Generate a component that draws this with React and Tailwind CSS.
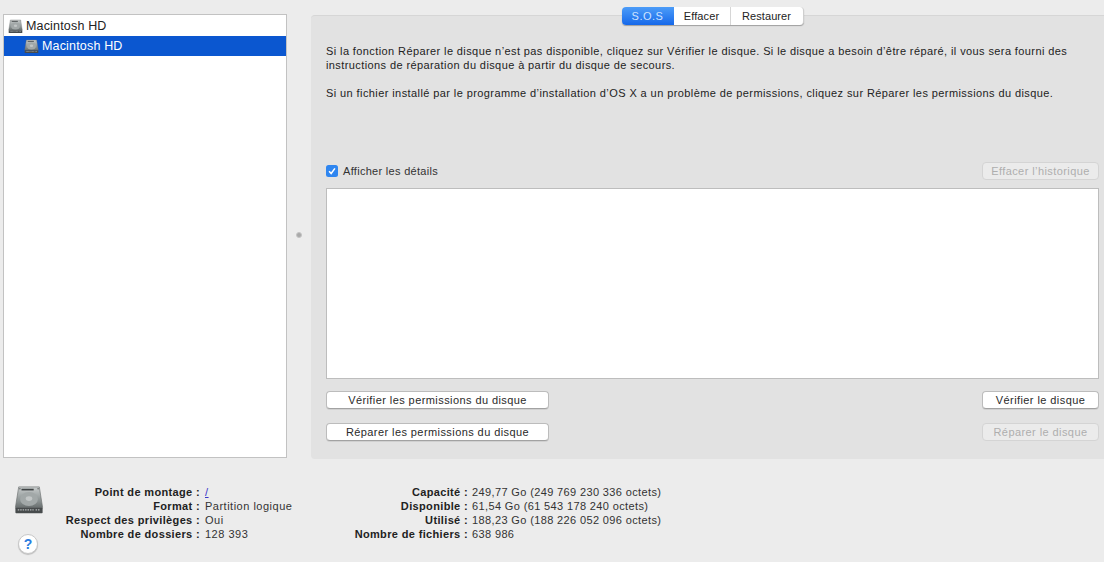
function HddIcon({ className, id }) {
  return (
    <svg viewBox="0 0 32 32" className={className}>
      <defs>
        <linearGradient id={id} x1="0" y1="0" x2="0" y2="1">
          <stop offset="0" stopColor="#c9cdcd" />
          <stop offset="0.65" stopColor="#8d9494" />
          <stop offset="1" stopColor="#6a7070" />
        </linearGradient>
      </defs>
      <path d="M5 2 H27 L30.5 24 H1.5 Z" fill={`url(#${id})`} stroke="#6b6f70" strokeWidth="0.7" />
      <rect x="1.5" y="24" width="29" height="6" rx="0.8" fill="#474b4c" />
      <path d="M4 26.5h17M23 26.5h5" stroke="#b3b7b7" strokeWidth="1.4" strokeDasharray="1.6 1" />
      <ellipse cx="16" cy="15" rx="9.5" ry="7.5" fill="#a2a8a8" />
      <ellipse cx="16" cy="14.5" rx="3.5" ry="2.6" fill="#c2c6c6" />
      <rect x="8" y="4" width="13" height="1.8" fill="#3f4344" />
      <circle cx="6.3" cy="4" r="0.7" fill="#555" />
      <circle cx="25.7" cy="4" r="0.7" fill="#555" />
    </svg>
  );
}

function SmallButton({ children, disabled, className = "" }) {
  return (
    <button
      className={
        "h-[18px] rounded-[4px] text-[11px] leading-[16px] tracking-[0.42px] border " +
        (disabled
          ? "border-[#d4d4d4] bg-[#ebebeb] text-[#aeaeae] "
          : "border-[#bcbcbc] border-b-[#a2a2a2] bg-white text-[#2a2a2a] shadow-[0_1px_0_rgba(0,0,0,0.08)] ") +
        className
      }
    >
      {children}
    </button>
  );
}

function InfoRow({ label, value, link }) {
  return (
    <>
      <span className="text-right font-bold text-[#222] tracking-[0.35px] whitespace-nowrap">{label} :</span>
      <span className={link ? "text-[#3a34c8] underline" : "text-[#333] whitespace-nowrap"}>{value}</span>
    </>
  );
}

export default function App() {
  return (
    <div
      className="w-[1104px] h-[562px] overflow-hidden flex flex-col bg-[#ececec] text-[#222]"
      style={{ fontFamily: '"Liberation Sans", Arial, sans-serif' }}
    >
      <div className="flex h-[445px] mt-[14px] shrink-0">
        <div className="ml-[3px] w-[284px] h-[444px] bg-white border border-[#c2c2c2] pt-[1px] text-[12.5px] tracking-[0.17px]">
          <div className="h-[20px] flex items-center pl-[4px] gap-[3px] text-[#222]">
            <HddIcon id="hddA" className="w-[15px] h-[15px]" />
            <span>Macintosh HD</span>
          </div>
          <div className="h-[20px] flex items-center pl-[20px] gap-[3px] bg-[#0b57d0] text-white">
            <HddIcon id="hddB" className="w-[15px] h-[15px]" />
            <span>Macintosh HD</span>
          </div>
        </div>

        <div className="w-[24px] flex items-center justify-center">
          <div className="w-[6px] h-[6px] rounded-full bg-[#a9a9a9] border border-[#c4c4c4] -mt-[3px]" />
        </div>

        <div className="flex-1 h-[444px] mt-[1px] bg-[#e2e2e2] border-t border-[#d6d6d6] rounded-tl-[4px] rounded-bl-[4px] flex flex-col pl-[15px] pr-[5px]">
          <div className="-mt-[9px] self-center flex h-[18px] w-[182px] rounded-[4px] overflow-hidden bg-white text-[11px] tracking-[0.1px] shadow-[0_1px_1px_rgba(0,0,0,0.3)] border-r border-[#cfcfcf]">
            <div className="w-[52px] flex items-center justify-center text-[#cfe3ff] tracking-[0.5px] bg-gradient-to-b from-[#4c9cf8] to-[#1568ea]">S.O.S</div>
            <div className="w-[57px] flex items-center justify-center border-r border-[#d6d6d6] text-[#222]">Effacer</div>
            <div className="flex-1 flex items-center justify-center text-[#222]">Restaurer</div>
          </div>

          <p className="mt-[19px] text-[11px] leading-[14px] tracking-[0.4px] text-[#222] whitespace-nowrap">
            Si la fonction Réparer le disque n’est pas disponible, cliquez sur Vérifier le disque. Si le disque a besoin d’être réparé, il vous sera fourni des
            <br />
            instructions de réparation du disque à partir du disque de secours.
          </p>
          <p className="mt-[14px] text-[11px] leading-[14px] tracking-[0.41px] text-[#222] whitespace-nowrap">
            Si un fichier installé par le programme d’installation d’OS X a un problème de permissions, cliquez sur Réparer les permissions du disque.
          </p>

          <div className="mt-[62px] flex items-center justify-between h-[18px]">
            <label className="flex items-center gap-[5px] text-[11px] tracking-[0.3px] text-[#333]">
              <span className="w-[12px] h-[12px] rounded-[2.5px] bg-[#2f86f0] flex items-center justify-center">
                <svg viewBox="0 0 12 12" className="w-[10px] h-[10px]">
                  <path d="M2.5 6.2 L5 9 L9.5 2.8" fill="none" stroke="#fff" strokeWidth="1.8" />
                </svg>
              </span>
              Afficher les détails
            </label>
            <SmallButton disabled className="w-[117px]">Effacer l’historique</SmallButton>
          </div>

          <div className="mt-[8px] h-[191px] bg-white border border-[#bdbdbd] shrink-0" />

          <div className="mt-[12px] flex justify-between">
            <SmallButton className="w-[223px]">Vérifier les permissions du disque</SmallButton>
            <SmallButton className="w-[117px]">Vérifier le disque</SmallButton>
          </div>
          <div className="mt-[14px] flex justify-between">
            <SmallButton className="w-[223px]">Réparer les permissions du disque</SmallButton>
            <SmallButton disabled className="w-[117px]">Réparer le disque</SmallButton>
          </div>
        </div>
      </div>

      <div className="flex mt-[26px] text-[11px] leading-[14px]">
        <div className="ml-[14px] w-[30px] flex flex-col items-center">
          <HddIcon id="hddC" className="w-[30px] h-[30px]" />
          <div className="mt-[19px] -ml-[2px] w-[20px] h-[20px] rounded-full bg-white border border-[#c8c8c8] shadow-[0_1px_1px_rgba(0,0,0,0.2)] flex items-center justify-center text-[14px] font-bold text-[#2b7de0]">?</div>
        </div>
        <div className="ml-[12px] w-[238px] grid grid-cols-[144px_1fr] gap-x-[5px] h-fit tracking-[0.5px]">
          <InfoRow label="Point de montage" value="/" link />
          <InfoRow label="Format" value="Partition logique" />
          <InfoRow label="Respect des privilèges" value="Oui" />
          <InfoRow label="Nombre de dossiers" value="128 393" />
        </div>
        <div className="ml-[60px] grid grid-cols-[114px_1fr] gap-x-[4px] h-fit tracking-[0.37px]">
          <InfoRow label="Capacité" value="249,77 Go (249 769 230 336 octets)" />
          <InfoRow label="Disponible" value="61,54 Go (61 543 178 240 octets)" />
          <InfoRow label="Utilisé" value="188,23 Go (188 226 052 096 octets)" />
          <InfoRow label="Nombre de fichiers" value="638 986" />
        </div>
      </div>
    </div>
  );
}
